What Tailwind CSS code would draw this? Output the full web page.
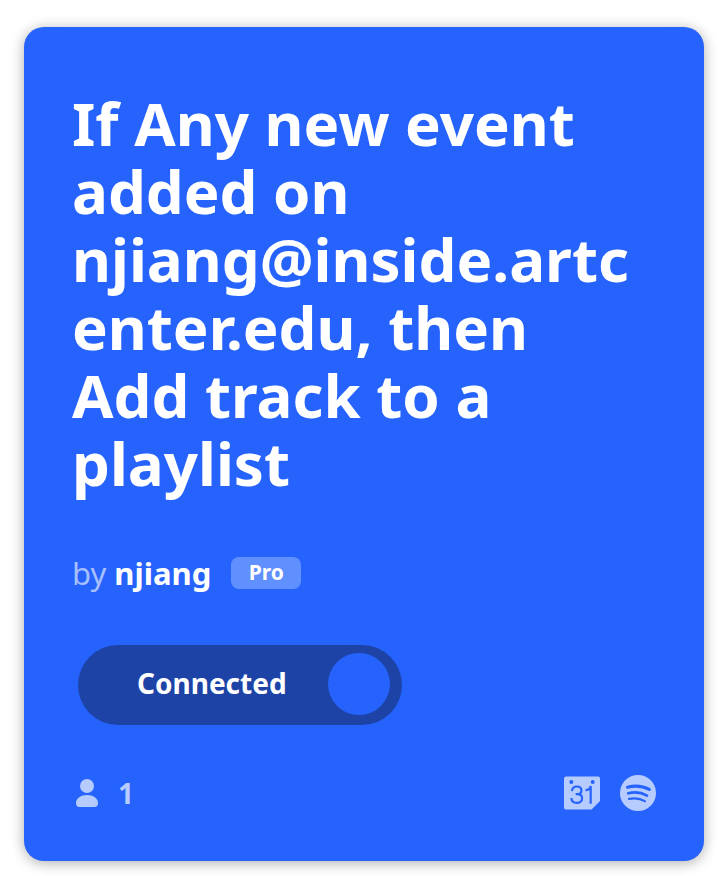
<!DOCTYPE html>
<html lang="en">
<head>
<meta charset="utf-8">
<meta name="viewport" content="width=device-width, initial-scale=1">
<title>Applet</title>
<script src="https://cdn.jsdelivr.net/npm/@tailwindcss/browser@4"></script>
</head>
<body class="bg-white pt-[27px] pr-[14px] pb-[15px] pl-6 font-['Avenir_Next','Noto_Sans',sans-serif] text-white">
<article class="rounded-[20px] bg-[#2663fc] px-12 pt-[62px] pb-[50px] shadow-[0_2px_14px_rgba(0,0,0,0.32)]">
  <h1 class="text-[60px] leading-[68px] font-bold wrap-anywhere">If Any new event added on njiang@inside.artc<wbr>enter.edu, then Add track to a playlist</h1>
  <div class="mt-14 flex h-10 items-center text-[31px] leading-10">
    <p><span class="text-white/60">by</span> <a href="#" class="font-bold">njiang</a></p>
    <span class="ml-5 flex h-8 w-[70px] items-center justify-center rounded-lg bg-[#6090fd] pb-[2px] text-[21px] leading-6 font-bold">Pro</span>
  </div>
  <label class="mt-[52px] ml-[6px] flex h-20 w-[324px] cursor-pointer items-center justify-between rounded-full bg-[#1d43a6] pr-3 pl-[59px]">
    <input type="checkbox" role="switch" checked class="sr-only">
    <span class="pb-1 text-[28px] leading-9 font-bold">Connected</span>
    <span class="mb-[2px] size-[62px] rounded-full bg-[#2663fc]"></span>
  </label>
  <footer class="mt-[50px] flex h-9 items-center justify-between text-[#b7ccfe]">
    <div class="flex items-center gap-5 pl-1">
      <svg class="h-7 w-[22px]" viewBox="0 0 22 28" fill="currentColor" aria-hidden="true"><circle cx="11" cy="7" r="7"/><path d="M0 24C0 19.500 5 16 11 16s11 3.500 11 8c0 2.500-1.200 4-3.500 4h-15C1.200 28 0 26.500 0 24z"/></svg>
      <span class="text-[28px] leading-9 font-bold">1</span>
    </div>
    <div class="flex items-center gap-5">
      <svg class="size-9" viewBox="0 0 36 36" role="img" aria-label="Google Calendar"><path fill="currentColor" d="M2 1.500h32a2 2 0 0 1 2 2V26l-8.500 8.500H2a2 2 0 0 1-2-2v-29a2 2 0 0 1 2-2z"/><g fill="#2663fc"><circle cx="7.300" cy="7" r="2"/><circle cx="28.700" cy="7" r="2"/></g><g fill="none" stroke="#2663fc" stroke-width="2.200"><path d="M7.900 16.200c.3-3.200 2.200-4.700 4.900-4.700 2.900 0 4.600 1.500 4.600 3.900 0 2.500-1.800 3.700-4.400 3.700h-1.300m1.300 0c3.100 0 5.100 1.500 5.100 4.200 0 2.800-2.200 4.600-5.200 4.600-3.200 0-5.300-1.700-5.500-4.900"/><path d="M21.500 15.200c2.900 0 4.600-1 5.200-4.200v17.800"/></g></svg>
      <svg class="size-9" viewBox="0 0 36 36" role="img" aria-label="Spotify"><circle cx="18" cy="18" r="18" fill="currentColor"/><g fill="none" stroke="#2663fc" stroke-linecap="round"><path stroke-width="3.200" d="M7.500 12.200c7.500-1.900 15.500-1.200 21.800 2.200"/><path stroke-width="2.700" d="M8.300 18.300c6.400-1.600 13-.9 18.700 2.300"/><path stroke-width="2.200" d="M9 23.900c5.500-1.200 11-.6 15.900 2.200"/></g></svg>
    </div>
  </footer>
</article>
</body>
</html>
